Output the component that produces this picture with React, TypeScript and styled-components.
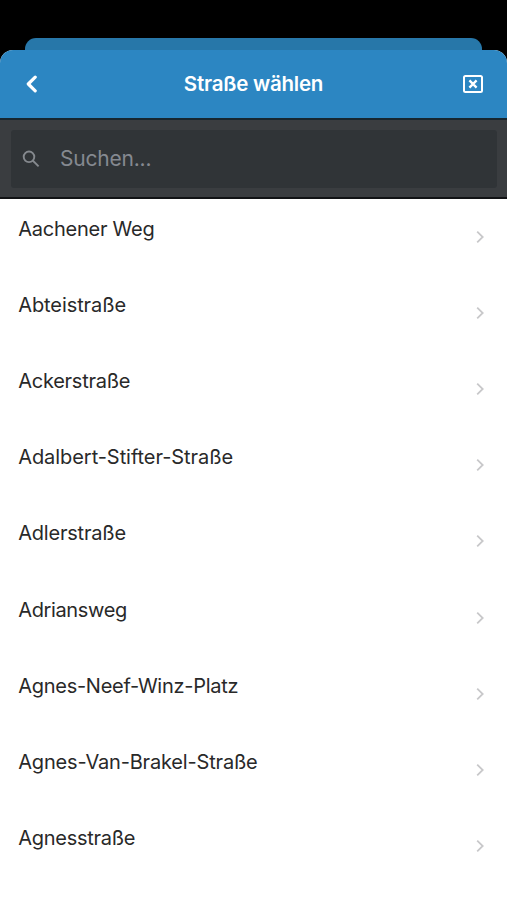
import React from "react";
import styled, { createGlobalStyle } from "styled-components";

const GlobalStyle = createGlobalStyle`
  * { box-sizing: border-box; }
  body { margin: 0; background: #000; }
`;

const Screen = styled.div`
  display: flex;
  flex-direction: column;
  height: 900px;
  padding-top: 38px;
  overflow: hidden;
  background: #000;
  font-family: Inter, "Liberation Sans", sans-serif;
`;

const BackSheet = styled.div`
  flex: none;
  height: 24px;
  margin: 0 25px -12px;
  border-radius: 11px 11px 0 0;
  background: #2777a9;
`;

const Sheet = styled.main`
  position: relative;
  flex: 1;
  display: flex;
  flex-direction: column;
  min-height: 0;
  overflow: hidden;
  border-radius: 13px 13px 0 0;
  background: #fff;
`;

const Header = styled.header`
  flex: none;
  display: grid;
  grid-template-columns: 62px 1fr 62px;
  align-items: center;
  height: 70px;
  padding-bottom: 1px;
  border-bottom: 2px solid #17262f;
  background: #2c86c2;
  color: #fff;
`;

const Title = styled.h1`
  margin: 0;
  text-align: center;
  font-size: 20.5px;
  line-height: 28px;
  font-weight: 600;
  letter-spacing: -0.23px;
`;

const IconButton = styled.button<{ $end?: boolean }>`
  display: flex;
  align-items: center;
  justify-content: ${(p) => (p.$end ? "flex-end" : "flex-start")};
  height: 44px;
  padding: ${(p) => (p.$end ? "0 24px 0 0" : "0 0 0 25px")};
  border: 0;
  background: none;
  color: inherit;

  svg { flex: none; }
`;

const SearchBar = styled.div`
  flex: none;
  height: 79px;
  padding: 10px 10px 10px 11px;
  border-bottom: 2px solid #111315;
  background: #3a3d40;
`;

const SearchField = styled.label`
  display: flex;
  align-items: center;
  gap: 20px;
  height: 58px;
  padding: 0 11px;
  border-radius: 3px;
  background: #303437;
  color: #85898e;
`;

const SearchInput = styled.input`
  flex: 1;
  min-width: 0;
  padding: 0;
  border: 0;
  outline: 0;
  background: none;
  font: 400 21px/28px Inter, sans-serif;
  letter-spacing: -0.2px;
  color: #d5d7d9;
  &::placeholder { color: #858990; opacity: 1; }
`;

const List = styled.ul`
  flex: none;
  margin: 0;
  padding: 0;
  list-style: none;
`;

const Row = styled.li`
  display: flex;
  justify-content: space-between;
  align-items: flex-start;
  height: 76.12px;
  padding: 16px 21px 0 18.2px;
  color: #292929;
`;

const Street = styled.span<{ $tracking: number }>`
  font-size: 20px;
  line-height: 28px;
  letter-spacing: ${(p) => p.$tracking}px;
  white-space: nowrap;
`;

const RowArrow = styled.svg`
  flex: none;
  margin-top: 15px;
`;

const streets = [
  { name: "Aachener Weg", tracking: -0.24 },
  { name: "Abteistraße", tracking: -0.08 },
  { name: "Ackerstraße", tracking: -0.26 },
  { name: "Adalbert-Stifter-Straße", tracking: -0.06 },
  { name: "Adlerstraße", tracking: -0.2 },
  { name: "Adriansweg", tracking: -0.36 },
  { name: "Agnes-Neef-Winz-Platz", tracking: -0.27 },
  { name: "Agnes-Van-Brakel-Straße", tracking: -0.18 },
  { name: "Agnesstraße", tracking: -0.26 },
];

export default function App() {
  return (
    <Screen>
      <GlobalStyle />
      <BackSheet />
      <Sheet>
        <Header>
          <IconButton aria-label="Zurück">
            <svg width="13" height="18" viewBox="0 0 13 18" fill="none">
              <path d="M10.2 2.2 3.3 9l6.9 6.8" stroke="currentColor" strokeWidth="3.2" strokeLinecap="round" strokeLinejoin="round" />
            </svg>
          </IconButton>
          <Title>Straße wählen</Title>
          <IconButton $end aria-label="Schließen">
            <svg width="20" height="18" viewBox="0 0 20 18" fill="none" stroke="currentColor">
              <rect x="1" y="1" width="18" height="16" rx="1.5" strokeWidth="2" />
              <path d="m6.4 5.4 7.2 7.2M13.6 5.4l-7.2 7.2" strokeWidth="2.3" />
            </svg>
          </IconButton>
        </Header>
        <SearchBar>
          <SearchField>
            <svg width="18" height="18" viewBox="0 0 18 18" fill="none" stroke="currentColor" strokeWidth="1.9">
              <circle cx="7" cy="6.8" r="5.3" />
              <path d="m10.7 10.5 5.9 5.9" />
            </svg>
            <SearchInput placeholder="Suchen..." />
          </SearchField>
        </SearchBar>
        <List>
          {streets.map((street) => (
            <Row key={street.name}>
              <Street $tracking={street.tracking}>{street.name}</Street>
              <RowArrow width="12" height="14" viewBox="0 0 12 14" fill="none">
                <path d="m3.2 1.6 5.5 5.4-5.5 5.4" stroke="#c8c8ca" strokeWidth="1.8" />
              </RowArrow>
            </Row>
          ))}
        </List>
      </Sheet>
    </Screen>
  );
}
